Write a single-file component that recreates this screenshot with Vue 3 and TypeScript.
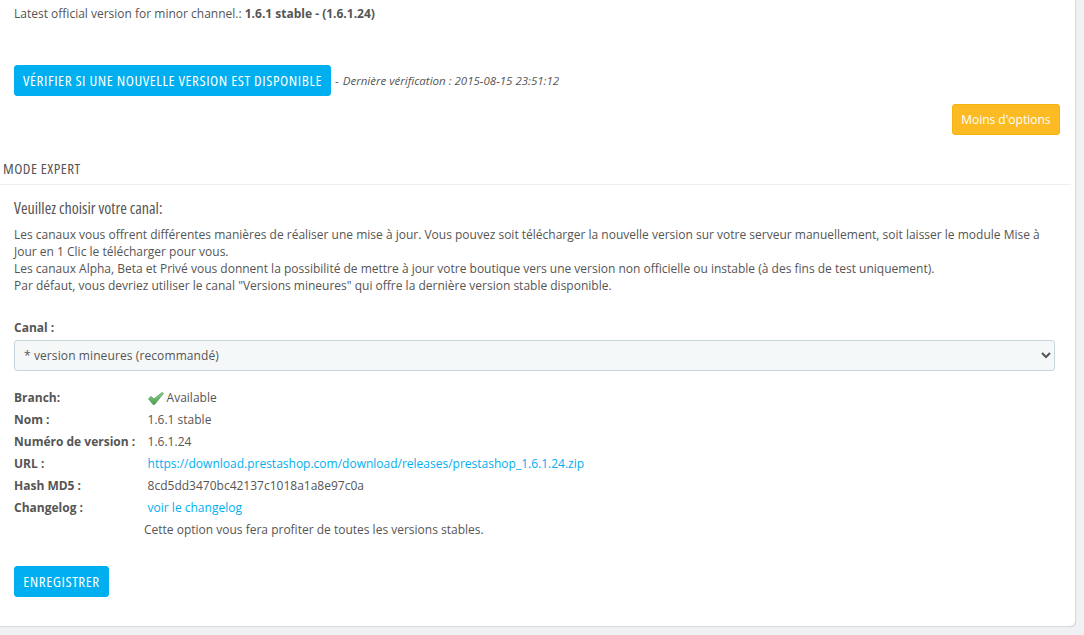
<script setup lang="ts">
interface Row { label: string; value: string; href?: boolean; check?: boolean }
const rows: Row[] = [
  { label: 'Branch:', value: 'Available', check: true },
  { label: 'Nom :', value: '1.6.1 stable' },
  { label: 'Numéro de version :', value: '1.6.1.24' },
  { label: 'URL :', value: 'https://download.prestashop.com/download/releases/prestashop_1.6.1.24.zip', href: true },
  { label: 'Hash MD5 :', value: '8cd5dd3470bc42137c1018a1a8e97c0a' },
  { label: 'Changelog :', value: 'voir le changelog', href: true },
]
</script>

<template>
  <div class="page">
    <main class="panel">
      <p class="latest">Latest official version for minor channel.: <b>1.6.1 stable - (1.6.1.24)</b></p>
      <div class="check-line">
        <button class="btn primary" type="button">VÉRIFIER SI UNE NOUVELLE VERSION EST DISPONIBLE</button>
        <span class="last-check"> - <em>Dernière vérification : 2015-08-15 23:51:12</em></span>
      </div>
      <div class="options-line">
        <button class="btn warning" type="button">Moins d'options</button>
      </div>
      <h3 class="section-title">MODE EXPERT</h3>
      <div class="section-body">
        <h4 class="subtitle">Veuillez choisir votre canal:</h4>
        <p class="intro">
          Les canaux vous offrent différentes manières de réaliser une mise à jour. Vous pouvez soit télécharger la nouvelle version sur votre serveur manuellement, soit laisser le module Mise à Jour en 1 Clic le télécharger pour vous.<br />
          Les canaux Alpha, Beta et Privé vous donnent la possibilité de mettre à jour votre boutique vers une version non officielle ou instable (à des fins de test uniquement).<br />
          Par défaut, vous devriez utiliser le canal "Versions mineures" qui offre la dernière version stable disponible.
        </p>
        <label class="channel-label" for="channel">Canal :</label>
        <select id="channel" class="channel">
          <option>* version mineures (recommandé)</option>
        </select>
        <dl class="details">
          <div v-for="row in rows" :key="row.label" class="row">
            <dt>{{ row.label }}</dt>
            <dd>
              <svg v-if="row.check" class="check" width="16" height="13" viewBox="0 0 16 13" aria-hidden="true">
                <defs>
                  <linearGradient id="check-fill" x1="0" y1="0" x2="0" y2="1">
                    <stop offset="0" stop-color="#8fd08f" />
                    <stop offset="1" stop-color="#4a9e50" />
                  </linearGradient>
                </defs>
                <path d="M0.5 6.8 L3 4.4 L6 7 L14 0.5 L15.5 1.4 L6.6 12.5 L5 12.5 Z" fill="url(#check-fill)" stroke="#4a9a52" stroke-width="0.7" stroke-linejoin="round" />
              </svg>
              <a v-if="row.href" href="#">{{ row.value }}</a>
              <template v-else>{{ row.value }}</template>
            </dd>
          </div>
        </dl>
        <p class="hint">Cette option vous fera profiter de toutes les versions stables.</p>
        <button class="btn primary save" type="button">ENREGISTRER</button>
      </div>
    </main>
  </div>
</template>

<style>
html, body { margin: 0; padding: 0; background: #eff1f2; overflow: hidden; }
</style>

<style scoped>
.page {
  width: 1084px;
  height: 635px;
  box-sizing: border-box;
  background: #eff1f2;
  font-family: "Open Sans", "Liberation Sans", sans-serif;
  font-size: 12px;
  line-height: 18px;
  color: #555;
}
.panel {
  width: 1075px;
  height: 626px;
  box-sizing: border-box;
  background: #fff;
  border-radius: 0 0 5px 0;
  box-shadow: 0 0 0 1px #d9dcde, 1px 1px 1px #d0d4d6;
  padding-top: 5px;
  overflow: hidden;
}
p { margin: 0; }
.latest { padding-left: 14px; }
.latest b { color: #555; }
.check-line {
  display: flex;
  align-items: center;
  margin-top: 42px;
  padding-left: 14px;
}
.btn {
  border: 1px solid #00aff0;
  border-radius: 3px;
  font-family: "Open Sans", sans-serif;
  font-stretch: 75%;
  font-size: 15px;
  letter-spacing: 0.57px;
  line-height: 18px;
  color: #fff;
  padding: 3px 8px 5px;
  height: 31px;
  box-sizing: border-box;
  cursor: pointer;
}
.primary { background: #00aff0; }
.warning {
  background: #fcbb22;
  border-color: #f5b30f;
  font-stretch: 100%;
  font-size: 12px;
  letter-spacing: 0;
  padding: 5px 8.5px;
}
.last-check { margin-left: 1px; font-size: 11.5px; white-space: pre; }
.last-check em { margin-left: 1px; }
.options-line {
  display: flex;
  justify-content: flex-end;
  margin-top: 8px;
  padding-right: 15px;
}
.section-title {
  margin: 23px 0 0;
  padding: 0 0 6px 3px;
  font-family: "Open Sans", sans-serif;
  font-stretch: 75%;
  font-size: 15px;
  letter-spacing: 0.5px;
  line-height: 20px;
  font-weight: 400;
  color: #555;
  border-bottom: 1px solid #eee;
  width: 1071px;
  box-sizing: border-box;
}
.section-body { padding: 0 20px 0 14px; }
.subtitle {
  margin: 13px 0 0;
  font-family: "Open Sans", sans-serif;
  font-stretch: 75%;
  font-size: 16px;
  line-height: 20px;
  font-weight: 400;
  color: #555;
}
.intro { margin-top: 7.6px; width: 1030px; line-height: 17.3px; }
.channel-label { display: block; margin-top: 24.7px; font-weight: 700; color: #555; }
.channel {
  display: block;
  width: 1041px;
  height: 31px;
  margin-top: 3px;
  padding: 0 5px;
  background-color: #f5f8f9;
  border: 1px solid #c7d6db;
  border-radius: 3px;
  font-family: inherit;
  font-size: 12px;
  letter-spacing: 0.1px;
  color: #555;
  outline: none;
}
.details { margin: 16px 0 0; }
.row { display: flex; height: 22px; align-items: center; }
dt { width: 133.6px; font-weight: 700; color: #555; white-space: nowrap; }
dd { margin: 0; display: flex; align-items: center; }
.check { margin-right: 3px; }
a { color: #00aff0; text-decoration: none; }
.hint { margin-top: 1.5px; padding-left: 130px; }
.save { display: block; margin-top: 27.5px; width: 95px; }
</style>
